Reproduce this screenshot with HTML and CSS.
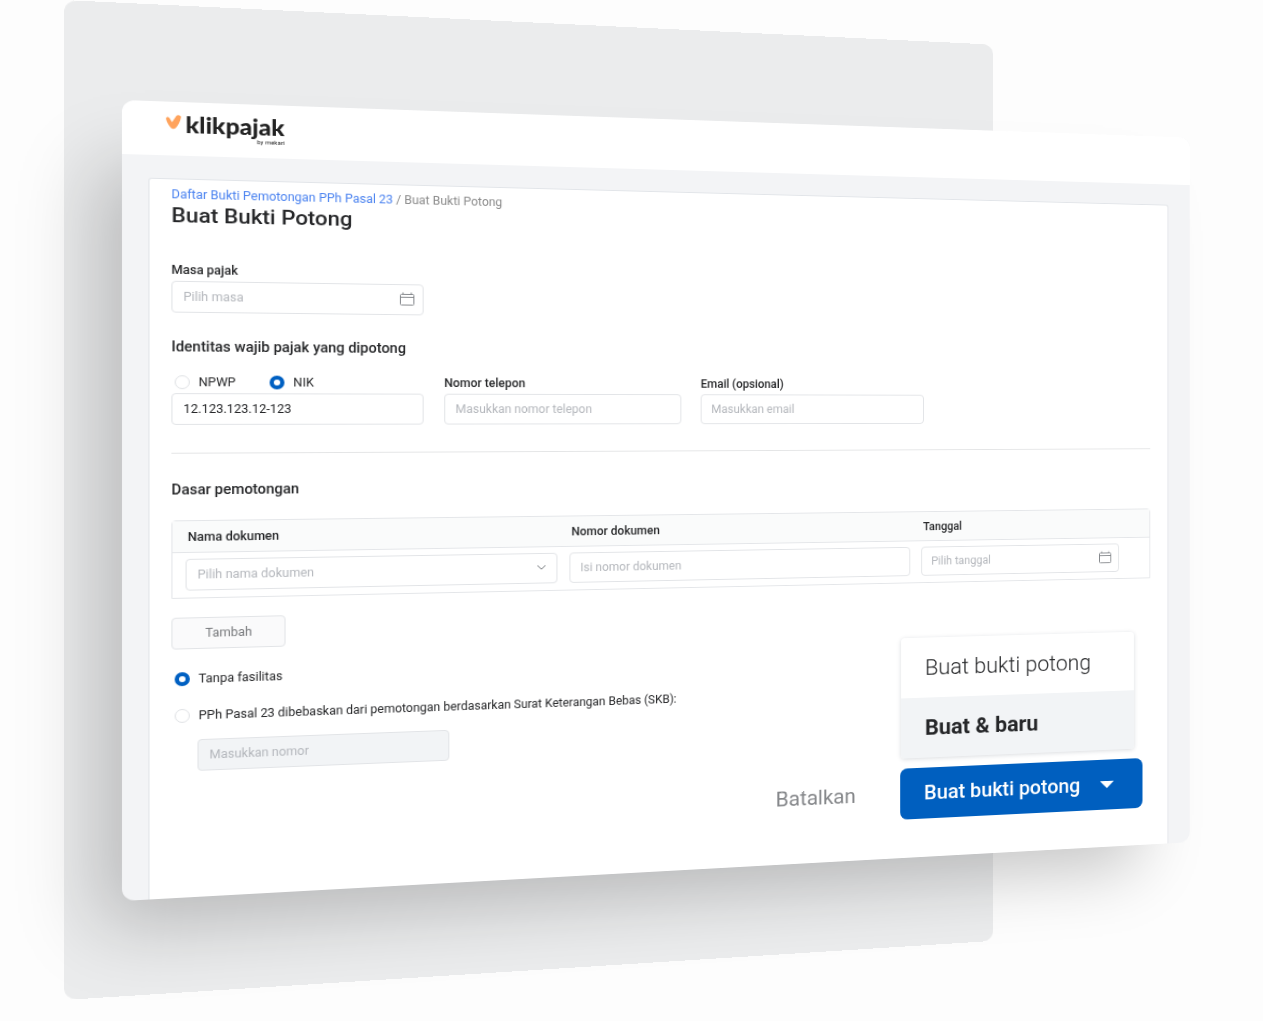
FILE: index.html
```html
<!DOCTYPE html>
<html lang="id">
<head>
<meta charset="utf-8">
<meta name="viewport" content="width=device-width, initial-scale=1">
<title>Buat Bukti Potong - Klikpajak</title>
<link rel="stylesheet" href="styles.css">
</head>
<body>
<main class="scene">
  <div class="backdrop-view"><div class="backdrop"></div></div>
  <div class="card-view">
    <div class="card">
      <header class="topbar">
        <svg class="logo-mark" viewBox="0 0 14 15" aria-hidden="true"><path d="M.1 4.2C-.1 2.6 1.9 1.7 3 3L5.6 7.4L9.6 1C10.6-.4 14 .3 13.8 2.4C13.3 6.2 11.3 10.2 9 13.2C7.8 14.7 5.7 14.7 4.6 13.2C2.4 10.5.7 7.6.1 4.2Z" fill="#ffa35c"/></svg>
        <div class="logo-text">
          <span class="logo-name">klikpajak</span>
          <span class="logo-by">by mekari</span>
        </div>
      </header>
      <form class="panel">
        <nav class="breadcrumb"><a href="#daftar">Daftar Bukti Pemotongan PPh Pasal 23</a> / Buat Bukti Potong</nav>
        <h1 class="title">Buat Bukti Potong</h1>

        <div class="row row-period">
          <div class="field">
            <label class="label" for="masa">Masa pajak</label>
            <div class="control">
              <input class="input" id="masa" type="text" placeholder="Pilih masa">
              <svg class="icon" viewBox="0 0 14 14" aria-hidden="true"><path d="M1.5 2.5h11a1 1 0 0 1 1 1v9a1 1 0 0 1-1 1h-11a1 1 0 0 1-1-1v-9a1 1 0 0 1 1-1zM.5 5.5h13M3 .5v2M11 .5v2"/></svg>
            </div>
          </div>
        </div>

        <h2 class="heading heading-identity">Identitas wajib pajak yang dipotong</h2>
        <div class="row row-identity">
          <div class="field">
            <div class="options">
              <label class="option"><input class="radio" type="radio" name="jenis"><span>NPWP</span></label>
              <label class="option"><input class="radio" type="radio" name="jenis" checked><span>NIK</span></label>
            </div>
            <div class="control"><input class="input" type="text" aria-label="NIK" value="12.123.123.12-123"></div>
          </div>
          <div class="field">
            <label class="label" for="telepon">Nomor telepon</label>
            <div class="control"><input class="input" id="telepon" type="text" placeholder="Masukkan nomor telepon"></div>
          </div>
          <div class="field">
            <label class="label" for="email">Email (opsional)</label>
            <div class="control"><input class="input" id="email" type="text" placeholder="Masukkan email"></div>
          </div>
        </div>

        <hr class="divider">

        <h2 class="heading heading-basis">Dasar pemotongan</h2>
        <table class="documents">
          <colgroup><col class="col-name"><col class="col-number"><col class="col-date"></colgroup>
          <thead>
            <tr><th scope="col">Nama dokumen</th><th scope="col">Nomor dokumen</th><th scope="col">Tanggal</th></tr>
          </thead>
          <tbody>
            <tr>
              <td>
                <div class="control">
                  <select class="input select" aria-label="Nama dokumen"><option>Pilih nama dokumen</option></select>
                  <svg class="icon icon-chevron" viewBox="0 0 14 14" aria-hidden="true"><path d="M3 5l4 4 4-4"/></svg>
                </div>
              </td>
              <td><div class="control"><input class="input" type="text" aria-label="Nomor dokumen" placeholder="Isi nomor dokumen"></div></td>
              <td class="cell-date">
                <div class="control">
                  <input class="input" type="text" aria-label="Tanggal" placeholder="Pilih tanggal">
                  <svg class="icon" viewBox="0 0 14 14" aria-hidden="true"><path d="M1.5 2.5h11a1 1 0 0 1 1 1v9a1 1 0 0 1-1 1h-11a1 1 0 0 1-1-1v-9a1 1 0 0 1 1-1zM.5 5.5h13M3 .5v2M11 .5v2"/></svg>
                </div>
              </td>
            </tr>
          </tbody>
        </table>
        <button class="add" type="button">Tambah</button>

        <div class="facilities">
          <label class="option"><input class="radio" type="radio" name="fasilitas" checked><span>Tanpa fasilitas</span></label>
          <label class="option"><input class="radio" type="radio" name="fasilitas"><span>PPh Pasal 23 dibebaskan dari pemotongan berdasarkan Surat Keterangan Bebas (SKB):</span></label>
        </div>
        <div class="control control-skb"><input class="input input-muted" type="text" aria-label="Nomor SKB" placeholder="Masukkan nomor"></div>

        <div class="actions">
          <button class="cancel" type="button">Batalkan</button>
          <div class="split">
            <div class="menu">
              <button class="menu-item" type="button">Buat bukti potong</button>
              <button class="menu-item menu-item-active" type="button">Buat &amp; baru</button>
            </div>
            <button class="submit" type="button">Buat bukti potong
              <svg class="caret" viewBox="0 0 16 8" aria-hidden="true"><path d="M0 0h16L8 8z" fill="#fff"/></svg>
            </button>
          </div>
        </div>
      </form>
    </div>
  </div>
</main>
</body>
</html>
```
FILE: styles.css
```css
* {
  box-sizing: border-box;
}

body {
  margin: 0;
  background: #fdfdfd;
  color: #262729;
  font-family: Roboto, "Liberation Sans", sans-serif;
  font-size: 12px;
  line-height: 16px;
}

button,
input,
select {
  font: inherit;
  color: inherit;
}

/* Two tilted sheets share one grid cell, the card above the backdrop */
.scene {
  display: grid;
  min-height: 100vh;
  padding: 0 3% 0 64px;
  align-items: start;
  overflow: hidden;
}

.backdrop-view,
.card-view {
  grid-area: 1 / 1;
  perspective: 2000px;
}

.backdrop-view {
  width: 82%;
  align-self: stretch;
  max-height: 1000px;
  max-width: 950px;
  perspective-origin: 105% 43%;
}

.backdrop {
  height: 100%;
  border-radius: 12px;
  background: #ebeced;
  transform: rotateY(14.1deg);
  transform-origin: left;
}

.card-view {
  max-width: 1100px;
  margin: 100px 0 120px 58px;
  perspective-origin: 98.6% 39%;
}

.card {
  border-radius: 12px;
  background: #f3f4f6;
  box-shadow: -40px 45px 70px -20px rgba(0, 0, 0, 0.22);
  transform: rotateY(14.4deg);
  transform-origin: left;
}

.topbar {
  display: flex;
  height: 54px;
  padding: 10px 40px 0;
  gap: 4px;
  border-radius: 12px 12px 0 0;
  background: #fff;
}

.logo-mark {
  width: 14px;
  height: 15px;
  margin-top: 3px;
}

.logo-text {
  display: flex;
  flex-direction: column;
  align-items: flex-end;
  color: #222;
}

.logo-name {
  font-family: Lato, sans-serif;
  font-size: 23px;
  font-weight: 900;
  line-height: 24px;
}

.logo-by {
  font-size: 6px;
  line-height: 8px;
}

.panel {
  margin: 23px 25px 0 24px;
  padding: 7px 20px 42px;
  border: 1px solid #e2e5e9;
  border-bottom: 0;
  border-radius: 3px 3px 0 0;
  background: #fff;
}

.breadcrumb {
  color: #8b8b8b;
}

.breadcrumb a {
  color: #4b83f0;
  text-decoration: none;
}

.title {
  margin: 1px 0 35px;
  font-size: 21px;
  font-weight: 500;
  line-height: 24px;
}

.row {
  display: flex;
  gap: 20px;
}

.field {
  display: flex;
  width: 238px;
  flex-direction: column;
  gap: 3px;
}

.label {
  font-weight: 500;
}

.control {
  position: relative;
}

.input {
  display: block;
  width: 100%;
  height: 32px;
  padding: 0 10px;
  border: 1px solid #e2e4e7;
  border-radius: 4px;
  background: #fff;
  outline: 0;
}

.input::placeholder,
.select {
  color: #b4b7bc;
  opacity: 1;
}

.select {
  appearance: none;
}

.input-muted {
  background: #f2f4f6;
}

.icon {
  position: absolute;
  top: 8px;
  right: 9px;
  width: 14px;
  height: 14px;
  fill: none;
  stroke: #85888c;
  stroke-width: 1;
  pointer-events: none;
}

.icon-chevron {
  stroke: #6f7378;
}

.heading {
  margin: 0;
  font-size: 14px;
  font-weight: 500;
  line-height: 20px;
}

.heading-identity {
  margin: 24px 0 18px;
}

.heading-basis {
  margin-bottom: 21px;
}

.options {
  display: flex;
  gap: 32px;
  padding-left: 3px;
}

.option {
  display: flex;
  align-items: center;
  gap: 8px;
}

.radio {
  width: 14px;
  height: 14px;
  margin: 0;
  border: 1px solid #e0e2e5;
  border-radius: 50%;
  background: #fff;
  appearance: none;
}

.radio:checked {
  border: 4px solid #0060c2;
}

.divider {
  height: 1px;
  margin: 28px 0 26px;
  border: 0;
  background: #e4e5e6;
}

.documents {
  width: 100%;
  border: 1px solid #e4e6e9;
  border-collapse: separate;
  border-spacing: 0;
  border-radius: 4px 4px 0 0;
  table-layout: fixed;
}

.col-name,
.col-number {
  width: 369px;
}

.documents th {
  height: 32px;
  padding: 0 14px;
  border-bottom: 1px solid #e4e6e9;
  background: #fafbfb;
  font-weight: 500;
  text-align: left;
}

.documents td {
  padding: 6px 0 7px 12px;
}

.documents .cell-date {
  padding-right: 35px;
}

.add {
  width: 106px;
  height: 32px;
  margin: 19px 0 22px;
  border: 1px solid #e2e4e7;
  border-radius: 4px;
  background: #fafafb;
  color: #77797c;
}

.facilities {
  display: flex;
  flex-direction: column;
  gap: 21px;
  padding-left: 3px;
}

.control-skb {
  width: 239px;
  margin: 16px 0 29px 24px;
}

.actions {
  display: flex;
  justify-content: flex-end;
  gap: 24px;
  padding-right: 9px;
  font-size: 22px;
  line-height: 24px;
}

.cancel {
  padding: 0 24px;
  border: 0;
  background: none;
  color: #85878a;
}

.split {
  position: relative;
}

.submit {
  display: flex;
  width: 272px;
  height: 56px;
  padding: 0 33px 0 26px;
  align-items: center;
  justify-content: space-between;
  border: 0;
  border-radius: 8px;
  background: #005fbf;
  color: #fff;
  font-weight: 500;
}

.caret {
  width: 16px;
  height: 8px;
}

.menu {
  position: absolute;
  right: 10px;
  bottom: 67px;
  left: 1px;
  border-radius: 4px;
  background: #fff;
  box-shadow: 0 1px 5px rgba(20, 30, 50, 0.16);
}

.menu-item {
  display: block;
  width: 100%;
  height: 66px;
  padding: 0 26px;
  border: 0;
  border-radius: 4px;
  background: none;
  font-size: 24px;
  font-weight: 300;
  text-align: left;
}

.menu-item-active {
  border-radius: 0 0 4px 4px;
  background: #f2f4f6;
  font-weight: 700;
}
```
